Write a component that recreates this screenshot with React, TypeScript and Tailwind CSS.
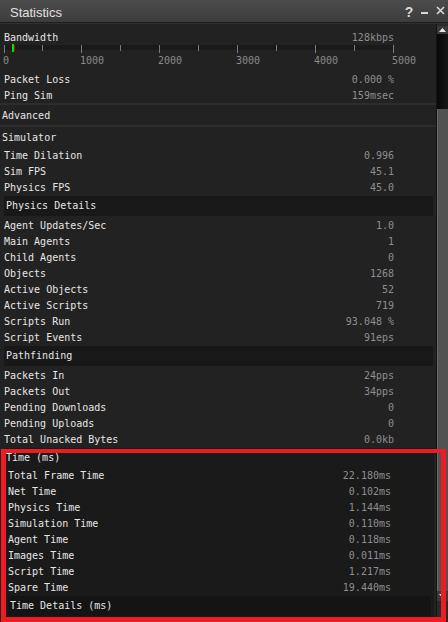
import React from "react";

type RowProps = { l: string; v: string; inner?: boolean };

function Row({ l, v, inner }: RowProps) {
  return (
    <div
      className={
        inner
          ? "flex h-[16px] leading-[20px] justify-between pl-[4px] pr-[43px]"
          : "flex h-[16px] leading-[20px] justify-between pl-[4px] pr-[42px]"
      }
    >
      <span className="text-[#e6e6e6] whitespace-pre">{l}</span>
      <span className="text-[#8e8e8e] whitespace-pre">{v}</span>
    </div>
  );
}

const net: [string, string][] = [
  ["Packet Loss", "0.000 %"],
  ["Ping Sim", "159msec"],
];
const sim: [string, string][] = [
  ["Time Dilation", "0.996"],
  ["Sim FPS", "45.1"],
  ["Physics FPS", "45.0"],
];
const phys: [string, string][] = [
  ["Agent Updates/Sec", "1.0"],
  ["Main Agents", "1"],
  ["Child Agents", "0"],
  ["Objects", "1268"],
  ["Active Objects", "52"],
  ["Active Scripts", "719"],
  ["Scripts Run", "93.048 %"],
  ["Script Events", "91eps"],
];
const path: [string, string][] = [
  ["Packets In", "24pps"],
  ["Packets Out", "34pps"],
  ["Pending Downloads", "0"],
  ["Pending Uploads", "0"],
  ["Total Unacked Bytes", "0.0kb"],
];
const time: [string, string][] = [
  ["Total Frame Time", "22.180ms"],
  ["Net Time", "0.102ms"],
  ["Physics Time", "1.144ms"],
  ["Simulation Time", "0.110ms"],
  ["Agent Time", "0.118ms"],
  ["Images Time", "0.011ms"],
  ["Script Time", "1.217ms"],
  ["Spare Time", "19.440ms"],
];

const ticks = [4, 42, 81, 120, 159, 198, 237, 276, 315, 354, 393];
const labels = ["0", "1000", "2000", "3000", "4000", "5000"];

function BandwidthChart() {
  return (
    <svg width="436" height="26" className="block">
      <rect x="4" y="1" width="390" height="5" fill="#1a1a1a" />
      {ticks.map((x, i) => (
        <rect
          key={x}
          x={x}
          y={1}
          width={1}
          height={i % 2 === 0 ? 8 : 6}
          fill="#7a7a7a"
        />
      ))}
      <rect x="12" y="-1" width="2" height="9" fill="#00e000" />
      <rect x="14" y="1" width="1" height="6" fill="#e00000" />
      {labels.map((t, i) => (
        <text
          key={t}
          x={ticks[i * 2] - 1}
          y={20}
          fontSize="10"
          fontFamily="'DejaVu Sans Mono', monospace"
          fill="#8a8a8a"
        >
          {t}
        </text>
      ))}
    </svg>
  );
}

export default function App() {
  return (
    <div className="relative w-[448px] h-[622px] overflow-hidden bg-[#222222] font-['DejaVu_Sans_Mono',monospace] text-[10px]">
      {/* Title bar */}
      <div className="flex h-[23px] items-center bg-gradient-to-b from-[#4c4c4c] to-[#3c3c3c] border-b border-[#1e1e1e]">
        <span className="pl-[10px] pt-[3px] font-['Liberation_Sans',sans-serif] text-[13px] text-[#e0e0e0]">
          Statistics
        </span>
        <div className="ml-auto flex h-full items-center">
          <div className="flex w-[13px] justify-center pt-[2px] pl-[1px] font-['Liberation_Sans',sans-serif] text-[14px] font-bold leading-none text-[#d8d8d8]">
            ?
          </div>
          <div className="flex w-[18px] justify-center">
            <svg width="7" height="16" viewBox="0 0 7 16">
              <rect x="0" y="9" width="7" height="2" fill="#d8d8d8" />
            </svg>
          </div>
          <div className="flex w-[15px] justify-center">
            <svg width="9" height="16" viewBox="0 0 9 16">
              <path d="M1 4 L8 11 M8 4 L1 11" stroke="#d8d8d8" strokeWidth="1.6" />
            </svg>
          </div>
        </div>
      </div>
      <div className="h-[1px] bg-[#2f2f2f]" />

      <div className="flex h-[597px]">
        {/* Content */}
        <div className="w-[436px] pt-[4px]">
          <div className="flex h-[16px] leading-[20px] justify-between pl-[4px] pr-[42px]">
            <span className="text-[#e6e6e6]">Bandwidth</span>
            <span className="text-[#8e8e8e]">128kbps</span>
          </div>
          <BandwidthChart />
          {net.map(([l, v]) => (
            <Row key={l} l={l} v={v} />
          ))}
          <div className="mt-[1px] h-[2px] bg-[#2d2d2d]" />
          <div className="h-[20px] pt-[1px] pl-[2px] leading-[20px] text-[#e6e6e6]">
            Advanced
          </div>
          <div className="h-[2px] bg-[#2d2d2d]" />
          <div className="h-[19px] pt-[1px] pl-[2px] leading-[20px] text-[#e6e6e6]">
            Simulator
          </div>
          {sim.map(([l, v]) => (
            <Row key={l} l={l} v={v} />
          ))}
          <div className="mt-[2px] ml-[4px] w-[429px] h-[20px] bg-[#181818] pl-[2px] leading-[20px] text-[#e6e6e6]">
            Physics Details
          </div>
          {phys.map(([l, v]) => (
            <Row key={l} l={l} v={v} />
          ))}
          <div className="mt-[2px] ml-[4px] w-[429px] h-[20px] bg-[#181818] pl-[2px] leading-[20px] text-[#e6e6e6]">
            Pathfinding
          </div>
          {path.map(([l, v]) => (
            <Row key={l} l={l} v={v} />
          ))}
          <div className="mt-[2px] ml-[4px] w-[430px] h-[200px] bg-[#1a1a1a]">
            <div className="h-[18px] pl-[2px] leading-[20px] text-[#e6e6e6]">
              Time (ms)
            </div>
            {time.map(([l, v]) => (
              <Row key={l} l={l} v={v} inner />
            ))}
            <div className="mt-[2px] ml-[4px] w-[423px] h-[20px] bg-[#141414] pl-[2px] leading-[20px] text-[#e6e6e6]">
              Time Details (ms)
            </div>
          </div>
        </div>

        {/* Scrollbar */}
        <div className="flex w-[12px] flex-col border-l border-[#141414]">
          <div className="h-[2px] bg-[#2a2a2a]" />
          <div className="flex h-[8px] items-center justify-center bg-[#3a3a3a]">
            <svg width="7" height="4" viewBox="0 0 7 4">
              <path d="M0 4 L3.5 0 L7 4 Z" fill="#e8e8e8" />
            </svg>
          </div>
          <div className="h-[75px] bg-gradient-to-r from-[#080808] to-[#161616]" />
          <div className="h-[482px] bg-[#525252] border-l border-[#686868]" />
          <div className="flex h-[10px] items-center justify-center bg-[#3a3a3a]">
            <svg width="7" height="4" viewBox="0 0 7 4">
              <path d="M0 0 L3.5 4 L7 0 Z" fill="#e8e8e8" />
            </svg>
          </div>
          <div className="flex-1 bg-[#2a2a2a]" />
        </div>
      </div>

      {/* Red annotation box */}
      <div className="pointer-events-none absolute left-[1px] top-[449px] w-[445px] h-[173px] border-[#ed1c24] border-t-[4px] border-x-[5px] border-b-[5px]" />
    </div>
  );
}
